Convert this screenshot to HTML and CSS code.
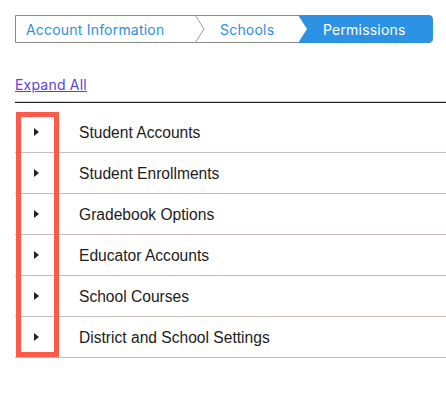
FILE: index.html
```html
<!DOCTYPE html>
<html lang="en">
<head>
    <meta charset="UTF-8">
    <meta name="viewport" content="width=device-width, initial-scale=1.0">
    <title>Permissions</title>
    <link rel="stylesheet" href="styles.css">
</head>
<body>
    <div class="steps">
        <div class="step step-first">Account Information</div>
        <svg class="step-sep" width="10" height="28" viewBox="0 0 10 28">
            <polyline points="0,0 9,14 0,28" fill="none" stroke="#9a9a9a" stroke-width="1"/>
        </svg>
        <div class="step step-second">Schools</div>
        <div class="step step-active">Permissions</div>
    </div>

    <a href="#" class="expand-all">Expand All</a>
    <div class="divider"></div>

    <div class="perm-list">
        <div class="perm-row"><span class="caret"></span><span class="perm-name">Student Accounts</span></div>
        <div class="perm-row"><span class="caret"></span><span class="perm-name">Student Enrollments</span></div>
        <div class="perm-row"><span class="caret"></span><span class="perm-name">Gradebook Options</span></div>
        <div class="perm-row"><span class="caret"></span><span class="perm-name">Educator Accounts</span></div>
        <div class="perm-row"><span class="caret"></span><span class="perm-name">School Courses</span></div>
        <div class="perm-row"><span class="caret"></span><span class="perm-name">District and School Settings</span></div>
        <!-- highlight box drawn over the toggles -->
        <div class="highlight"></div>
    </div>
</body>
</html>
```

FILE: styles.css
```css
* {
    margin: 0;
    padding: 0;
    box-sizing: border-box;
}

body {
    padding: 15px 0 0 15px;
    background: #fff;
    font-family: 'Inter', 'Liberation Sans', sans-serif;
}

.steps {
    display: flex;
    width: 418px;
    height: 28px;
    border: 1px solid #8c8c8c;
    border-radius: 0 4px 4px 0;
}

.step {
    display: flex;
    align-items: center;
    font-size: 14px;
    letter-spacing: 0.2px;
    color: #2b8fe3;
    height: 26px;
}

.step-first {
    width: 179px;
    padding-left: 10px;
}

.step-sep {
    flex: none;
    margin: -1px 0;
}

.step-second {
    width: 93px;
    padding-left: 15px;
}

.step-active {
    flex: 1;
    height: 28px;
    margin: -1px -1px -1px 0;
    padding-left: 25px;
    background: #2b92e4;
    color: #fff;
    border-radius: 0 5px 5px 0;
    clip-path: polygon(0 0, 100% 0, 100% 100%, 0 100%, 9px 50%);
}

.expand-all {
    display: inline-block;
    margin-top: 33px;
    font-size: 14px;
    letter-spacing: 0.2px;
    line-height: 17px;
    color: #5a3fd9;
    text-decoration: underline;
}

.divider {
    margin-top: 8px;
    height: 1px;
    background: #222;
    box-shadow: 0 -1px 0 #d0d0d0;
}

.perm-list {
    position: relative;
    margin-top: 9px;
}

.perm-row {
    display: flex;
    align-items: center;
    height: 41px;
    border-bottom: 1px solid #cbbcbc;
}

.caret {
    width: 0;
    height: 0;
    margin: 0 40px 0 19px;
    border-left: 5px solid #222;
    border-top: 4px solid transparent;
    border-bottom: 4px solid transparent;
}

.perm-name {
    padding-top: 2px;
    font-family: 'Liberation Sans', Arial, sans-serif;
    font-size: 15.6px;
    color: #1c1c1c;
}

.highlight {
    position: absolute;
    top: 0;
    left: 1px;
    width: 43px;
    height: 245px;
    border: 5px solid #fd5a4a;
}
```
